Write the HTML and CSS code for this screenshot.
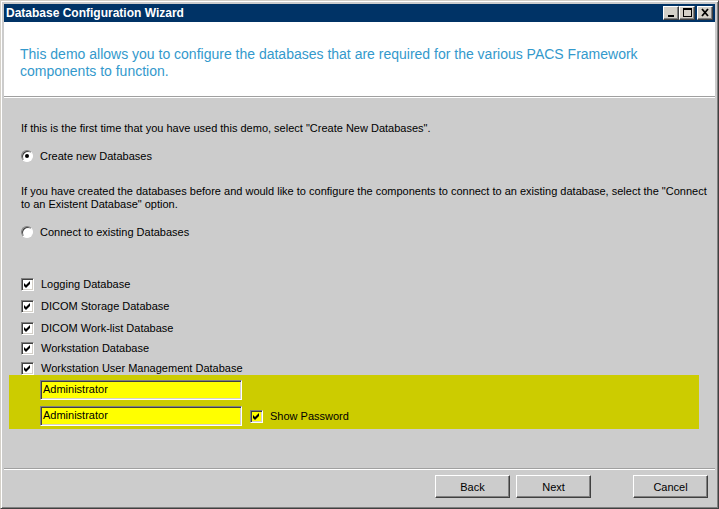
FILE: index.html
```html
<!DOCTYPE html>
<html lang="en">
<head>
    <meta charset="UTF-8">
    <title>Database Configuration Wizard</title>
    <link rel="stylesheet" href="styles.css">
</head>
<body>
    <div class="window">
        <div class="titlebar">
            <span class="title">Database Configuration Wizard</span>
            <div class="caption-buttons">
                <span class="cap-btn">
                    <svg width="14" height="12" viewBox="0 0 14 12" shape-rendering="crispEdges"><rect x="4" y="8" width="6" height="2" fill="#000"/></svg>
                </span>
                <span class="cap-btn">
                    <svg width="14" height="12" viewBox="0 0 14 12" shape-rendering="crispEdges"><rect x="3.5" y="1.5" width="8" height="8" fill="none" stroke="#000"/><rect x="3" y="1" width="9" height="2" fill="#000"/></svg>
                </span>
                <span class="cap-btn gap">
                    <svg width="14" height="12" viewBox="0 0 14 12"><path d="M4 2 L10 9 M10 2 L4 9" stroke="#000" stroke-width="1.8"/></svg>
                </span>
            </div>
        </div>

        <div class="header">
            <p>This demo allows you to configure the databases that are required for the various PACS Framework<br>components to function.</p>
        </div>

        <div class="content">
            <p class="note first">If this is the first time that you have used this demo, select "Create New Databases".</p>

            <div class="option radio-row">
                <span class="radio checked"></span>
                <span>Create new Databases</span>
            </div>

            <p class="note second">If you have created the databases before and would like to configure the components to connect to an existing database, select the "Connect<br>to an Existent Database" option.</p>

            <div class="option radio-row">
                <span class="radio"></span>
                <span>Connect to existing Databases</span>
            </div>

            <div class="checklist">
                <div class="option check-row"><span class="check"><svg width="9" height="9" viewBox="0 0 9 9"><path d="M1 3 L3 5 L7 1 L7 4 L3 8 L1 6 Z" fill="#000"/></svg></span><span>Logging Database</span></div>
                <div class="option check-row"><span class="check"><svg width="9" height="9" viewBox="0 0 9 9"><path d="M1 3 L3 5 L7 1 L7 4 L3 8 L1 6 Z" fill="#000"/></svg></span><span>DICOM Storage Database</span></div>
                <div class="option check-row"><span class="check"><svg width="9" height="9" viewBox="0 0 9 9"><path d="M1 3 L3 5 L7 1 L7 4 L3 8 L1 6 Z" fill="#000"/></svg></span><span>DICOM Work-list Database</span></div>
                <div class="option check-row"><span class="check"><svg width="9" height="9" viewBox="0 0 9 9"><path d="M1 3 L3 5 L7 1 L7 4 L3 8 L1 6 Z" fill="#000"/></svg></span><span>Workstation Database</span></div>
                <div class="option check-row"><span class="check"><svg width="9" height="9" viewBox="0 0 9 9"><path d="M1 3 L3 5 L7 1 L7 4 L3 8 L1 6 Z" fill="#000"/></svg></span><span>Workstation User Management Database</span></div>
            </div>

            <div class="credentials">
                <div class="field-row">
                    <div class="field">Administrator</div>
                </div>
                <div class="field-row">
                    <div class="field">Administrator</div>
                    <div class="option show-pass">
                        <span class="check yellow"><svg width="9" height="9" viewBox="0 0 9 9"><path d="M1 3 L3 5 L7 1 L7 4 L3 8 L1 6 Z" fill="#000"/></svg></span>
                        <span>Show Password</span>
                    </div>
                </div>
            </div>
        </div>

        <div class="footer">
            <button class="btn">Back</button>
            <button class="btn">Next</button>
            <button class="btn cancel">Cancel</button>
        </div>
    </div>
</body>
</html>
```

FILE: styles.css
```css
/* Base */
html, body {
    margin: 0;
    padding: 0;
    background: #cccccc;
}

body {
    font-family: 'Liberation Sans', Arial, sans-serif;
    font-size: 11px;
    color: #000;
}

p {
    margin: 0;
}

/* Window frame */
.window {
    box-sizing: border-box;
    width: 719px;
    height: 509px;
    display: flex;
    flex-direction: column;
    padding: 3px;
    background: #cccccc;
    border: 1px solid;
    border-color: #d4d0c8 #404040 #404040 #d4d0c8;
    box-shadow: inset 1px 1px #ffffff, inset -1px -1px #808080;
}

.titlebar {
    height: 18px;
    display: flex;
    align-items: center;
    justify-content: space-between;
    background: #003366;
    color: #fff;
    padding-left: 2px;
}

.title {
    font-weight: bold;
    font-size: 12px;
}

.caption-buttons {
    display: flex;
    padding-right: 2px;
}

.cap-btn {
    box-sizing: border-box;
    width: 16px;
    height: 14px;
    display: flex;
    align-items: center;
    justify-content: center;
    background: #d4d0c8;
    border: 1px solid;
    border-color: #ffffff #404040 #404040 #ffffff;
    box-shadow: inset -1px -1px #808080;
}

.cap-btn.gap {
    margin-left: 2px;
}

/* Header */
.header {
    height: 74px;
    background: #ffffff;
    border-bottom: 1px solid #a0a0a0;
    padding-left: 16px;
}

.header p {
    padding-top: 24px;
    font-size: 14px;
    line-height: 17px;
    color: #3399cc;
    white-space: nowrap;
}

/* Content */
.content {
    flex: 1;
    border-top: 1px solid #ffffff;
    padding: 0 16px 0 17px;
}

.note {
    line-height: 13px;
    white-space: nowrap;
}

.note.first {
    margin-top: 24px;
}

.note.second {
    margin-top: 22px;
}

.option {
    display: flex;
    align-items: center;
    height: 14px;
    line-height: 14px;
}

.radio-row {
    gap: 7px;
    margin-top: 14px;
}

.radio {
    box-sizing: border-box;
    width: 12px;
    height: 12px;
    border-radius: 50%;
    background: #ffffff;
    border: 1px solid;
    border-color: #808080 #ffffff #ffffff #808080;
    box-shadow: inset 1px 1px #404040;
    position: relative;
}

.radio.checked::after {
    content: "";
    position: absolute;
    left: 3px;
    top: 3px;
    width: 4px;
    height: 4px;
    border-radius: 50%;
    background: #000;
}

.checklist {
    margin-top: 38px;
}

.check-row {
    gap: 7px;
    margin-bottom: 8px;
}

.check-row:nth-child(3),
.check-row:nth-child(4) {
    margin-bottom: 6px;
}

.check-row:last-child {
    margin-bottom: 0;
}

.check {
    box-sizing: border-box;
    width: 13px;
    height: 13px;
    display: flex;
    align-items: center;
    justify-content: center;
    background: #ffffff;
    border: 1px solid;
    border-color: #808080 #ffffff #ffffff #808080;
    box-shadow: inset 1px 1px #404040, inset -1px -1px #d4d0c8;
}

.check.yellow {
    background: #ffff00;
}

/* Credential panel */
.credentials {
    margin: 0 0 0 -12px;
    background: #cccc00;
    padding: 5px 0 3px 31px;
    display: flex;
    flex-direction: column;
    gap: 6px;
}

.field-row {
    display: flex;
    align-items: center;
    gap: 8px;
}

.field {
    box-sizing: border-box;
    width: 202px;
    height: 20px;
    line-height: 17px;
    padding-left: 2px;
    background: #ffff00;
    border: 1px solid;
    border-color: #808080 #ffffff #ffffff #808080;
    box-shadow: inset 1px 1px #404040, inset -1px -1px #d4d0c8;
}

.show-pass {
    gap: 7px;
}

/* Footer */
.footer {
    display: flex;
    align-items: center;
    justify-content: flex-end;
    border-top: 1px solid #a0a0a0;
    box-shadow: inset 0 1px #ffffff;
    padding: 6px 7px 7px 0;
    gap: 6px;
}

.btn {
    box-sizing: border-box;
    width: 75px;
    height: 23px;
    font-family: 'Liberation Sans', Arial, sans-serif;
    font-size: 11px;
    color: #000;
    background: #cccccc;
    border: 1px solid;
    border-color: #ffffff #404040 #404040 #ffffff;
    box-shadow: inset -1px -1px #808080;
    padding: 0;
}

.btn.cancel {
    margin-left: 36px;
}
```
